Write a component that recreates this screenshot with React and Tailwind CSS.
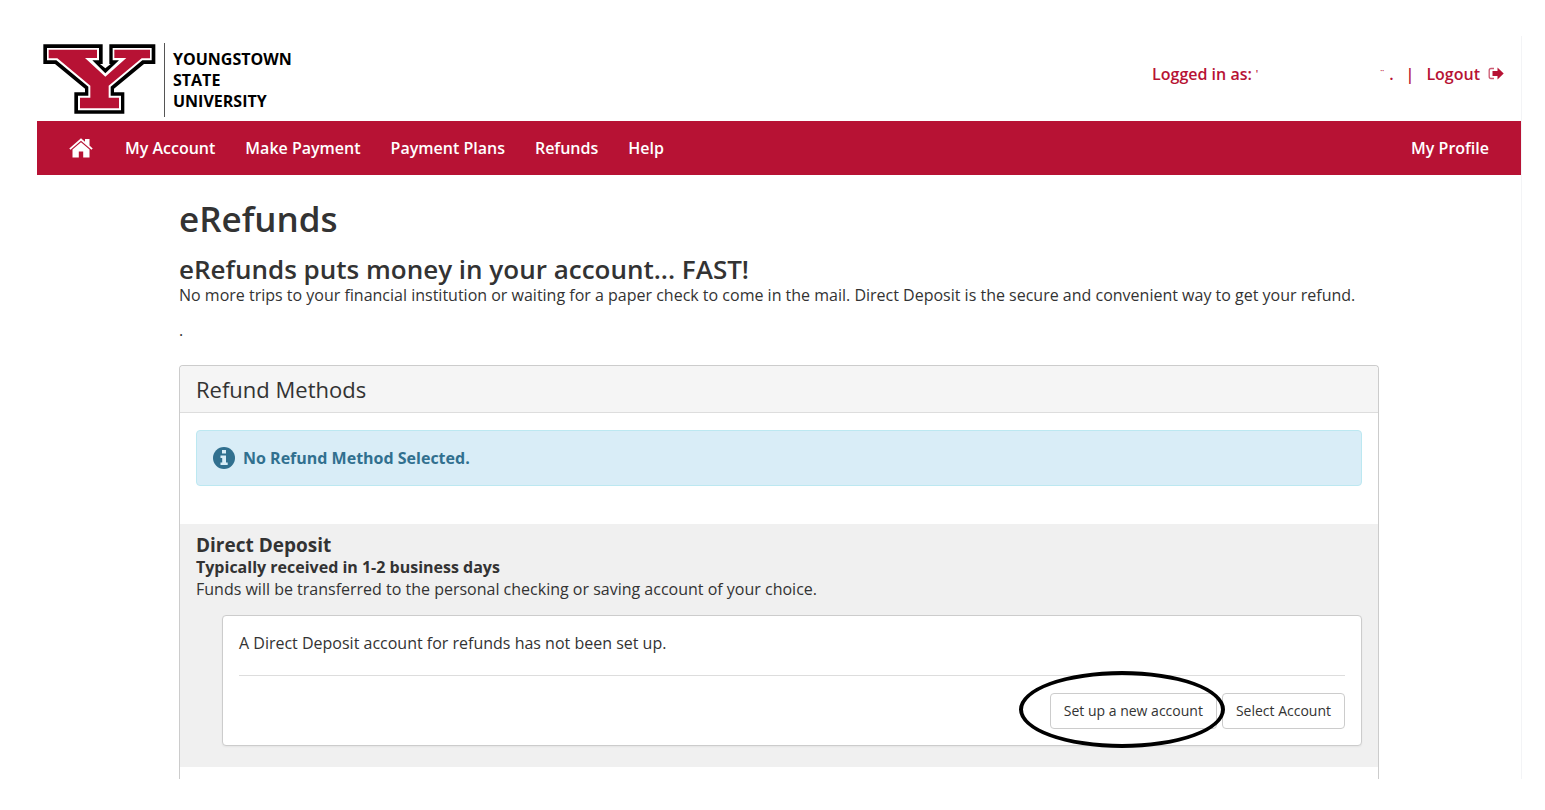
const navLinks = ['My Account', 'Make Payment', 'Payment Plans', 'Refunds', 'Help'];

function Logo() {
  return (
    <a href="#" className="flex items-start gap-2 text-black">
      <svg className="w-[113px] h-[72px]" viewBox="40 39 339 216" role="img" aria-label="Y logo">
        <path
          fill="#000"
          d="M41 43H219V102H211L227 115L243 102H239V43H377V102H343L253 176V187H284V251H134V187H166V176L76 102H41Z"
        />
        <path
          fill="#fff"
          d="M52 54H208V91H188L227 130L268 91H249V54H366V91H338L243 170V197H274V241H145V197H176V170L80 91H52Z"
        />
        <path
          fill="#b71234"
          d="M57 59H202V84H166L227 140L290 84H254V59H361V85H336L237 167V203H268V235H151V203H182V167L83 85H57Z"
        />
      </svg>
      <span className="border-l border-[#555] pl-2 h-[74px] pt-[6px] text-base leading-[21px] font-bold">
        YOUNGSTOWN
        <br />
        STATE
        <br />
        UNIVERSITY
      </span>
    </a>
  );
}

function HomeIcon() {
  return (
    <svg className="w-6 h-5" viewBox="0 0 24 20" fill="currentColor" aria-hidden="true">
      <path d="M12 .3L16 3.8V1H20.5V7.6L23.7 10.4L22.5 11.8L12 2.8L1.5 11.8L.3 10.4Z" />
      <path d="M12 4.2L20.5 11.5V19.5H14.2V13.5H9.8V19.5H3.5V11.5Z" />
    </svg>
  );
}

function InfoIcon() {
  return (
    <svg className="w-[22px] h-[22px]" viewBox="0 0 22 22" aria-hidden="true">
      <circle cx="11" cy="11" r="11" fill="currentColor" />
      <path d="M9 3H13V6.5H9ZM7.5 8.5H13V15.5H14.7V18H7.5V15.5H9.2V11H7.5Z" fill="#d9edf7" />
    </svg>
  );
}

function SignOutIcon() {
  return (
    <svg className="w-4 h-4" viewBox="0 0 16 16" aria-hidden="true">
      <path d="M6 2.5H3Q1.2 2.5 1.2 4.5V10.5Q1.2 12.5 3 12.5H6" fill="none" stroke="currentColor" strokeWidth="1.3" strokeOpacity="0.7" />
      <path d="M4.5 5H9.5V1.5L15.7 7.5L9.5 13.5V10H4.5Z" fill="currentColor" />
    </svg>
  );
}

export default function App() {
  return (
    <div className="ml-[37px] mr-[23px] border-r border-gray-100 mt-9 font-['Open_Sans','Noto_Sans',sans-serif] text-base leading-[22px] text-[#333]">
      {/* Header */}
      <header className="flex items-start justify-between pl-[6px] pt-[7px] h-[85px]">
        <Logo />
        <div className="flex items-center pt-5 pr-[17px] font-semibold text-[#b71234]">
          <span>Logged in as:</span>
          <span className="ml-1 text-[10px] leading-4">'</span>
          <span className="ml-[121px] text-[10px]">¨</span>
          <span className="ml-1">.</span>
          <span className="mx-3">|</span>
          <a href="#" className="flex items-center gap-2">
            Logout
            <SignOutIcon />
          </a>
        </div>
      </header>

      {/* Navigation */}
      <nav className="flex items-center bg-[#b71234] h-[54px] px-8 text-white font-semibold">
        <a href="#" aria-label="Home" className="mr-8">
          <HomeIcon />
        </a>
        <div className="flex gap-[30px]">
          {navLinks.map((label) => (
            <a key={label} href="#">{label}</a>
          ))}
        </div>
        <a href="#" className="ml-auto">My Profile</a>
      </nav>

      <main className="mx-[142px] pt-6">
        <h1 className="text-[35px] leading-10 font-semibold">eRefunds</h1>
        <h2 className="mt-[15px] text-[26px] leading-[30px] font-semibold">eRefunds puts money in your account... FAST!</h2>
        <p>
          No more trips to your financial institution or waiting for a paper check to come in the mail. Direct Deposit is the secure and convenient way to get your refund.
        </p>
        <p className="mt-[13px]">.</p>

        {/* Refund methods */}
        <section className="mt-6 border border-b-0 border-[#ccc] rounded-t">
          <h3 className="bg-[#f5f5f5] border-b border-[#ddd] rounded-t px-4 text-[22px] leading-[46px] font-medium">
            Refund Methods
          </h3>
          <div className="px-4 pt-[17px] pb-[38px]">
            <div className="flex items-center gap-2 h-14 px-4 bg-[#d9edf7] border border-[#bce8f1] rounded text-[#31708f] font-bold">
              <InfoIcon />
              No Refund Method Selected.
            </div>
          </div>

          <div className="bg-[#f0f0f0] px-4 pt-[10px] pb-[21px]">
            <h4 className="text-[19px] leading-[22px] font-bold">Direct Deposit</h4>
            <p className="font-bold">Typically received in 1-2 business days</p>
            <p>Funds will be transferred to the personal checking or saving account of your choice.</p>

            <div className="mt-[15px] ml-[26px] p-4 bg-white border border-[#ccc] rounded shadow-xs">
              <p className="pb-[21px] border-b border-[#ddd]">A Direct Deposit account for refunds has not been set up.</p>
              <div className="mt-[17px] flex justify-end gap-[5px]">
                <div className="relative">
                  <button className="h-9 px-[13px] bg-white border border-[#ccc] rounded text-sm">Set up a new account</button>
                  <span className="absolute -left-[31px] -right-2 -top-[22px] -bottom-[19px] border-4 border-black rounded-[50%] pointer-events-none" />
                </div>
                <button className="h-9 px-[13px] bg-white border border-[#ccc] rounded text-sm">Select Account</button>
              </div>
            </div>
          </div>
          <div className="h-3" />
        </section>
      </main>
    </div>
  );
}
